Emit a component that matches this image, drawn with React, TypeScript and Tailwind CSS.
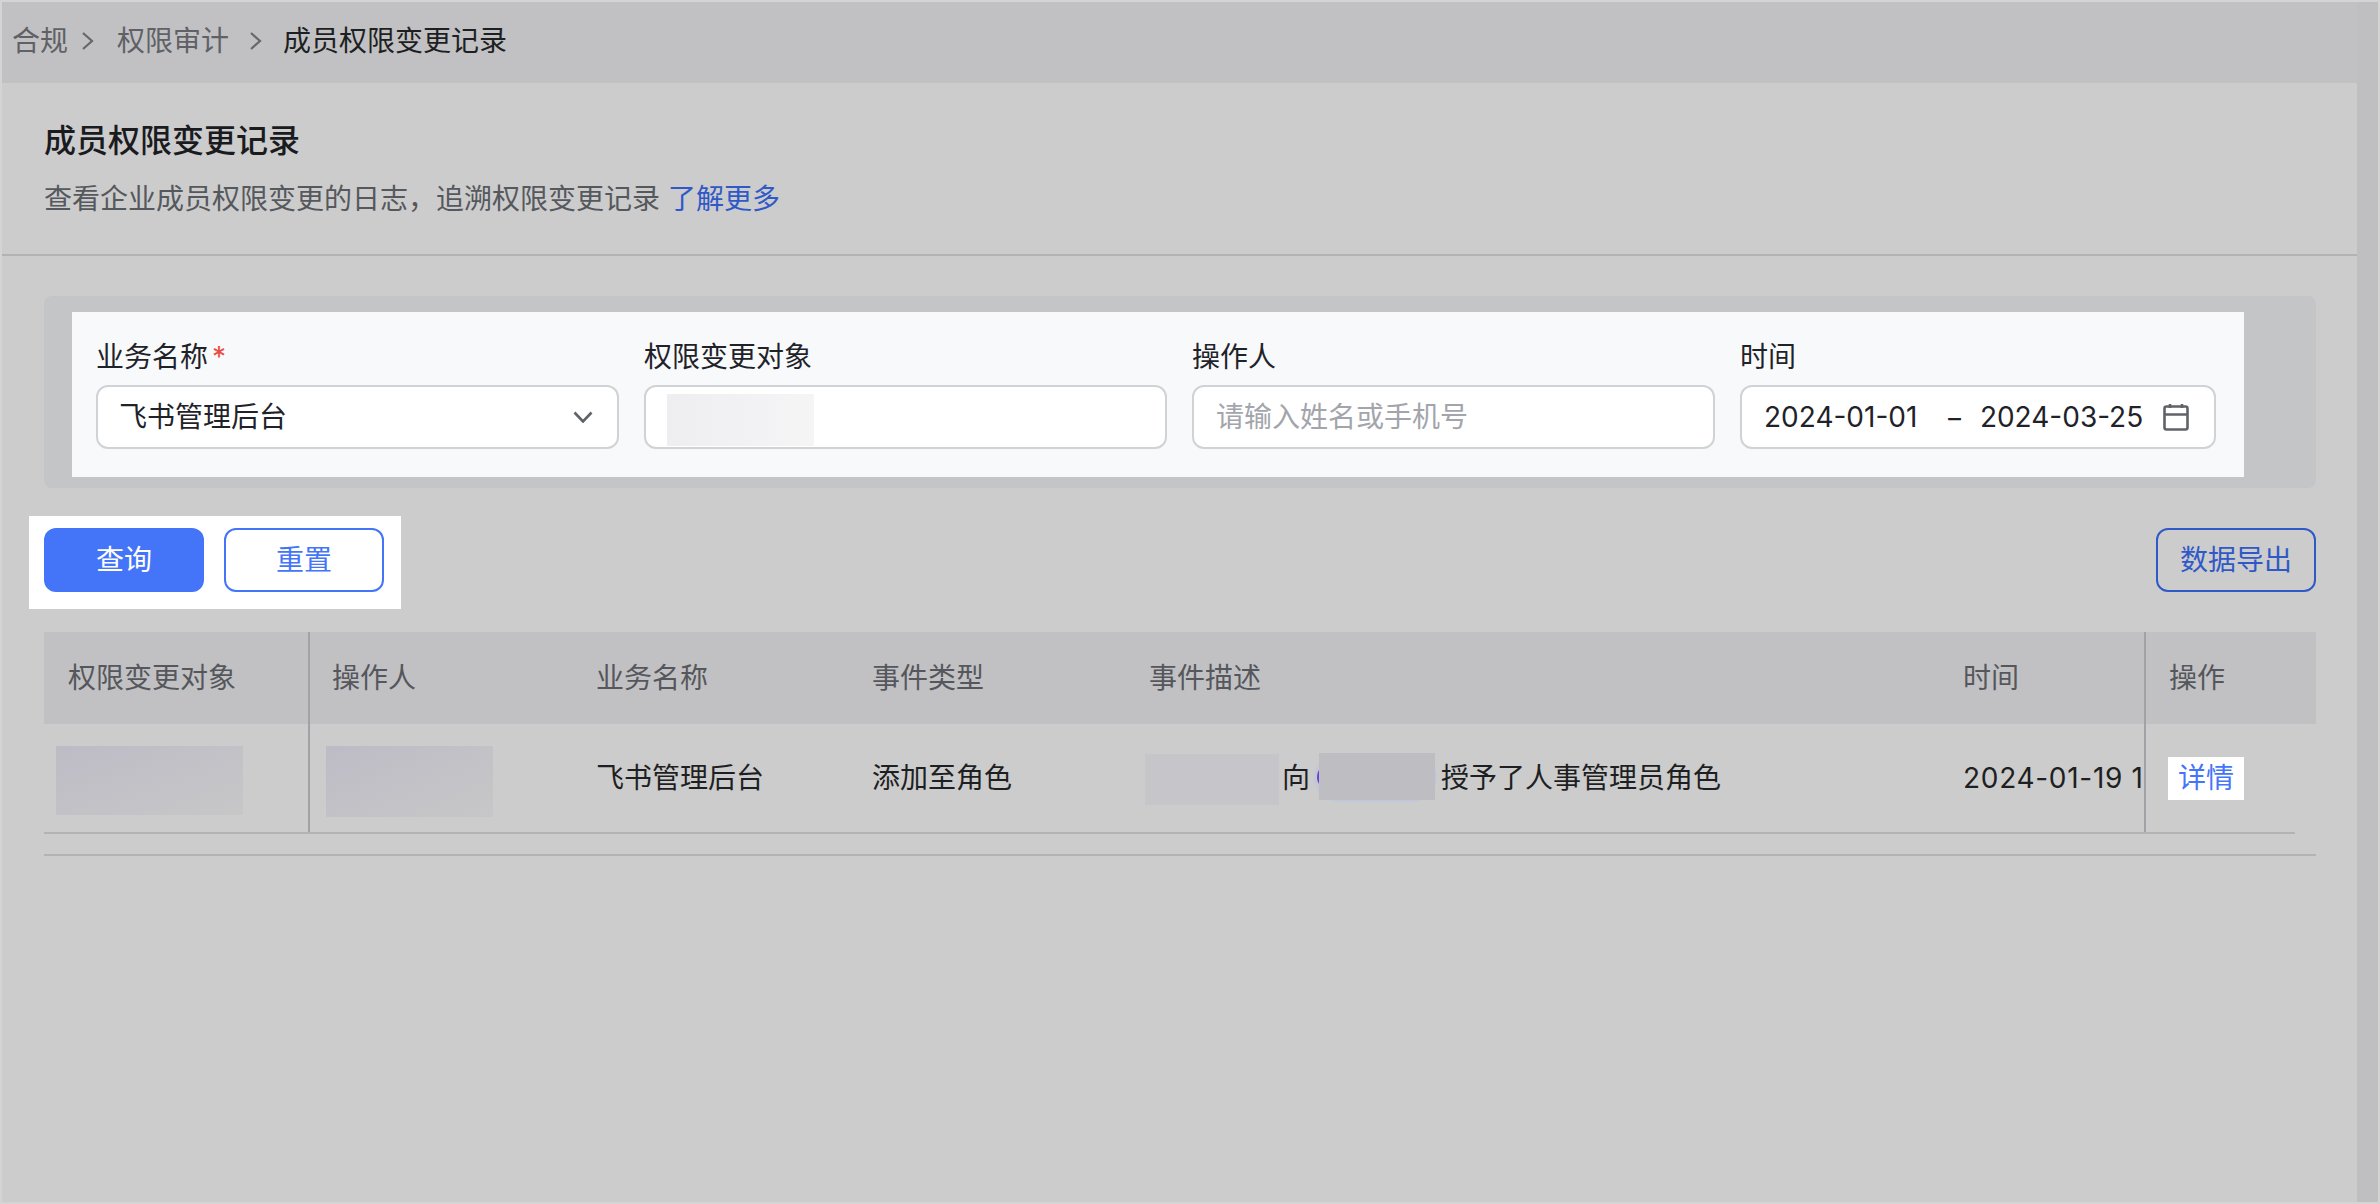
const font = "[font-family:Inter,'Noto_Sans_CJK_SC',sans-serif]";

function Field({ label, required, className, children }: { label: string; required?: boolean; className: string; children: React.ReactNode }) {
  return (
    <div className={className}>
      <div className="flex h-[40px] items-center text-[28px] leading-[40px] text-[#1f2329]">
        {label}
        {required && <span className="ml-[4px] text-[#ea4d45]">*</span>}
      </div>
      <div className="mt-[8px] flex h-[64px] items-center rounded-[12px] border-2 border-[#d0d3d6] bg-white px-[22px] text-[28px] text-[#1f2329]">
        {children}
      </div>
    </div>
  );
}

function Chevron() {
  return (
    <svg width="20" height="12" viewBox="0 0 20 12" fill="none" stroke="#5f6368" strokeWidth="2.6" className="mr-[2px] ml-auto">
      <path d="M1.5 1.5l8.5 9 8.5-9" />
    </svg>
  );
}

function Calendar() {
  return (
    <svg width="28" height="28" viewBox="0 0 28 28" fill="none" stroke="#5f6368" strokeWidth="2.6" className="mr-[2px] ml-auto">
      <rect x="2.5" y="3.5" width="23" height="23" rx="2" />
      <path d="M2.5 11.5h23M8 1v4M20 1v4" />
    </svg>
  );
}

const cols = "grid grid-cols-[264px_264px_276px_277px_814px_205px_172px]";

export default function App() {
  return (
    <div className={`flex h-[1204px] w-[2380px] overflow-hidden border-2 border-[#d4d4d5] bg-[#cccccc] text-[28px] ${font}`}>
      <div className="flex min-w-0 flex-1 flex-col">
        {/* breadcrumb */}
        <div className="flex h-[81px] shrink-0 items-center bg-[#c1c1c3] pb-[3px] pl-[10px] text-[#5f6166]">
          <span>合规</span>
          <svg width="16" height="24" viewBox="0 0 16 24" fill="none" stroke="#65676c" strokeWidth="2.2" className="mr-[21px] ml-[12px]">
            <path d="M3 4l9 8-9 8" />
          </svg>
          <span>权限审计</span>
          <svg width="16" height="24" viewBox="0 0 16 24" fill="none" stroke="#65676c" strokeWidth="2.2" className="mx-[19px]">
            <path d="M3 4l9 8-9 8" />
          </svg>
          <span className="text-[#1e1f22]">成员权限变更记录</span>
        </div>

        {/* title */}
        <div className="h-[173px] shrink-0 border-b-2 border-[#b3b3b3] pl-[42px]">
          <div className="mt-[36px] text-[32px] leading-[44px] font-medium text-[#1a1b1e]">成员权限变更记录</div>
          <div className="mt-[16px] leading-[40px] text-[#55585d]">
            查看企业成员权限变更的日志，追溯权限变更记录
            <span className="ml-[8px] text-[#3059c8]">了解更多</span>
          </div>
        </div>

        {/* filters */}
        <div className="mt-[40px] mr-[41px] ml-[42px] h-[192px] shrink-0 rounded-[8px] bg-[#c4c5c7] pt-[16px] pl-[28px]">
          <div className="flex h-[165px] w-[2172px] gap-[25px] bg-[#f8f9fb] pt-[25px] pl-[24px]">
            <Field label="业务名称" required className="w-[523px]">
              <span className="-ml-px">飞书管理后台</span>
              <Chevron />
            </Field>
            <Field label="权限变更对象" className="w-[523px]">
              <div className="mt-[6px] -ml-px h-[52px] w-[147px] bg-gradient-to-r from-[#eeeef1] to-[#f5f5f6]" />
            </Field>
            <Field label="操作人" className="w-[523px]">
              <span className="text-[#a2a5ab]">请输入姓名或手机号</span>
            </Field>
            <Field label="时间" className="w-[476px]">
              <span>2024-01-01</span>
              <span className="ml-[28px]">−</span>
              <span className="ml-[16px]">2024-03-25</span>
              <Calendar />
            </Field>
          </div>
        </div>

        {/* actions */}
        <div className="mt-[28px] flex h-[93px] shrink-0 items-start justify-between pr-[41px] pl-[27px]">
          <div className="flex h-[93px] w-[372px] items-start gap-[20px] bg-white pt-[12px] pl-[15px]">
            <button className="h-[64px] w-[160px] rounded-[12px] bg-[#4475f9] text-white">查询</button>
            <button className="h-[64px] w-[160px] rounded-[12px] border-2 border-[#4475f9] text-[#4475f9]">重置</button>
          </div>
          <button className="mt-[12px] h-[64px] w-[160px] rounded-[12px] border-2 border-[#3059c8] text-[#3059c8]">数据导出</button>
        </div>

        {/* table */}
        <div className="mt-[23px] ml-[42px] w-[2272px] shrink-0">
          <div className={`${cols} h-[92px] items-center bg-[#c1c1c3] text-[#55575c]`}>
            <div className="flex h-full items-center pl-[24px]">权限变更对象</div>
            <div className="flex h-full items-center border-l-2 border-[#a0a2a6] pl-[22px]">操作人</div>
            <div className="pl-[24px]">业务名称</div>
            <div className="pl-[24px]">事件类型</div>
            <div className="pl-[24px]">事件描述</div>
            <div className="pl-[24px]">时间</div>
            <div className="flex h-full items-center border-l-2 border-[#a0a2a6] pl-[23px]">操作</div>
          </div>
          <div className={`${cols} h-[108px] items-center text-[#1e1f22]`}>
            <div className="flex h-full items-center pl-[12px]">
              <div className="mt-[4px] h-[69px] w-[187px] bg-gradient-to-br from-[#bdbcc6] to-[#c7c7c8]" />
            </div>
            <div className="flex h-full items-center border-l-2 border-[#a0a2a6] pl-[16px]">
              <div className="mt-[6px] h-[71px] w-[167px] bg-gradient-to-br from-[#bdbcc6] to-[#c7c7c8]" />
            </div>
            <div className="pl-[24px]">飞书管理后台</div>
            <div className="pl-[24px]">添加至角色</div>
            <div className="flex items-center pl-[20px]">
              <div className="mt-[3px] h-[51px] w-[134px] bg-[#c6c5ca]" />
              <span className="ml-[3px]">向</span>
              <div className="relative ml-[4px] h-[48px] w-[123px] rounded-full bg-[#c3c8d8]">
                <div className="absolute top-[10px] left-[3px] h-[26px] w-[26px] rounded-full bg-[#6d45c8]" />
                <div className="absolute top-[-1px] left-[5px] h-[47px] w-[116px] bg-[#bebec2]" />
              </div>
              <span className="ml-[4px]">授予了人事管理员角色</span>
            </div>
            <div className="overflow-hidden pl-[24px] tracking-[0.7px] whitespace-nowrap">2024-01-19 1</div>
            <div className="flex h-full items-center border-l-2 border-[#a0a2a6] pl-[22px]">
              <span className="bg-white px-[10px] leading-[43px] text-[#4475f9]">详情</span>
            </div>
          </div>
          <div className="h-[2px] w-[2251px] bg-[#b3b3b3]" />
          <div className="mt-[20px] h-[2px] bg-[#b3b3b3]" />
        </div>
      </div>
      <div className="w-[21px] shrink-0 bg-[#bfbfc1]" />
    </div>
  );
}
